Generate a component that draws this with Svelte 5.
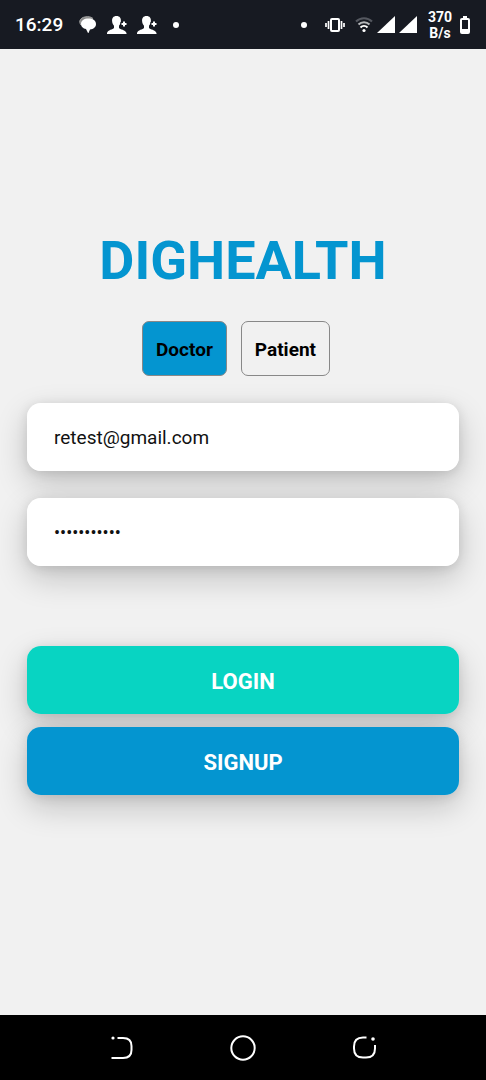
<script>
  let role = $state('Doctor');
  let email = $state('retest@gmail.com');
  let password = $state('password123');
  const roles = ['Doctor', 'Patient'];
</script>

{#snippet contact()}
  <svg width="20" height="18" viewBox="0 0 20 18" fill="#fff" aria-hidden="true">
    <path d="M9.500 0c3.300 0 4.600 2.200 4.400 5-.1 2-.9 3.700-1.900 4.700V12c1 1.600 6.500 1.700 7.500 5v1H0v-1c.8-3.300 6-3.400 7-5V9.700C6 8.700 5.200 7 5.100 5 4.900 2.200 6.200 0 9.500 0z" />
    <path d="M17 4.500v7M13.500 8H20" stroke="#171a22" stroke-width="4" />
    <path d="M17 5.500v5M14.500 8h5" stroke="#fff" stroke-width="2" />
  </svg>
{/snippet}

{#snippet signal()}
  <svg width="18" height="18" viewBox="0 0 18 18" aria-hidden="true">
    <path d="M18 0v17H0z" fill="#fff" />
  </svg>
{/snippet}

<div class="screen">
  <header class="status">
    <div class="left">
      <time>16:29</time>
      <svg width="18" height="18" viewBox="0 0 18 18" aria-hidden="true">
        <path d="M2 9C-1 5 2 1.500 6 1c3-.6 6-.3 8 1.500" fill="#888" stroke="#aaa" />
        <path d="M9.500 2.500c4.500 0 7.500 2 7.500 5.500 0 3.200-2.500 5.200-6 5.500L9.500 17H9l-2-4C4 12.500 2 10.800 2 8c0-3.500 3-5.500 7.500-5.500z" fill="#fff" />
      </svg>
      {@render contact()}
      {@render contact()}
      <span class="dot"></span>
    </div>
    <div class="right">
      <span class="dot"></span>
      <svg class="vibrate" width="20" height="16" viewBox="0 0 20 16" fill="none" stroke="#fff" stroke-width="2" aria-hidden="true">
        <rect x="6" y="2" width="8" height="12" rx="1" />
        <path d="M3.500 4v8M16.500 4v8" stroke-width="1.700" />
        <path d="M1 6v4M19 6v4" stroke-width="1.700" />
      </svg>
      <svg class="wifi" width="18" height="18" viewBox="0 0 18 18" fill="none" stroke-width="2" aria-hidden="true">
        <path d="M1 5.500C5.500 1 12.500 1 17 5.500" stroke="#555860" />
        <path d="M3.500 8.500c3-3 8-3 11 0" stroke="#b5b7ba" />
        <path d="M5.500 11.500c2-2 5-2 7 0" stroke="#fff" />
        <circle cx="9" cy="14.500" r="1.600" fill="#fff" />
      </svg>
      {@render signal()}
      {@render signal()}
      <span class="speed">370<br />B/s</span>
      <svg width="12" height="18" viewBox="0 0 12 18" aria-hidden="true">
        <path d="M4 0h4v2H4z" fill="#fff" />
        <rect x="2" y="3" width="8" height="14" rx="1" fill="none" stroke="#fff" stroke-width="2" />
        <path d="M2 13h8v4H2z" fill="#fff" />
      </svg>
    </div>
  </header>

  <main>
    <h1>DIGHEALTH</h1>
    <div class="roles" role="group" aria-label="Role">
      {#each roles as name}
        <button type="button" class="role" class:active={role === name} aria-pressed={role === name} onclick={() => (role = name)}>{name}</button>
      {/each}
    </div>
    <form onsubmit={(e) => e.preventDefault()}>
      <div class="fields">
        <div class="raised"><input type="email" aria-label="Email" autocomplete="off" bind:value={email} /></div>
        <div class="raised"><input type="password" aria-label="Password" autocomplete="off" bind:value={password} /></div>
      </div>
      <div class="actions">
        <button class="raised login" type="submit">LOGIN</button>
        <button class="raised signup" type="button">SIGNUP</button>
      </div>
    </form>
  </main>

  <nav aria-label="System">
    <button type="button" aria-label="Back">
      <svg width="26" height="26" viewBox="0 0 26 26" fill="none" stroke="#fff" stroke-width="2">
        <path d="M8.500 3H14c6 0 8.500 2.500 8.500 8v4c0 5.500-2.500 8-8.500 8H2.500" />
        <circle cx="4" cy="3" r="1.600" fill="#fff" stroke="none" />
      </svg>
    </button>
    <button type="button" aria-label="Home">
      <svg width="26" height="26" viewBox="0 0 26 26" fill="none" stroke="#fff" stroke-width="2">
        <circle cx="13" cy="13" r="11.700" />
      </svg>
    </button>
    <button type="button" aria-label="Recent apps">
      <svg width="26" height="26" viewBox="0 0 26 26" fill="none" stroke="#fff" stroke-width="2">
        <path d="M15.500 2.500H12c-6 0-9 3-9 9v2c0 6 3 9 9 9h3c6 0 9-3 9-9V10" />
        <circle cx="22" cy="4" r="1.800" fill="#fff" stroke="none" />
      </svg>
    </button>
  </nav>
</div>

<style>
  :global(body) {
    margin: 0;
    background: #f1f1f1;
  }
  .screen {
    min-height: 100vh;
    display: flex;
    flex-direction: column;
    font-family: Roboto, sans-serif;
    color: #000;
  }
  button,
  input {
    font-family: inherit;
    border: 0;
    margin: 0;
  }
  button {
    cursor: pointer;
  }
  svg {
    display: block;
    flex: none;
  }
  .status {
    height: 49px;
    padding: 0 15px;
    box-sizing: border-box;
    background: #171a22;
    color: #fff;
    display: flex;
    justify-content: space-between;
    align-items: center;
  }
  .left,
  .right {
    display: flex;
    align-items: center;
  }
  .left {
    gap: 10px;
  }
  time {
    font-size: 19px;
    font-weight: 500;
    margin-right: 6px;
  }
  .dot {
    width: 6px;
    height: 6px;
    margin: 0 6px;
    border-radius: 50%;
    background: #fff;
  }
  .right {
    gap: 4px;
  }
  .vibrate {
    margin: 0 6px 0 8px;
  }
  .speed {
    width: 30px;
    margin-left: 4px;
    font-size: 14px;
    line-height: 16px;
    font-weight: 700;
    text-align: center;
  }
  main {
    flex: 1;
    padding: 180px 27px 40px;
    isolation: isolate;
  }
  h1 {
    margin: 0;
    font-size: 54px;
    line-height: 64px;
    font-weight: 700;
    text-align: center;
    color: #0495d0;
  }
  .roles {
    display: flex;
    justify-content: center;
    margin: 28px 0 27px;
  }
  .role {
    height: 55px;
    margin-right: 14px;
    padding: 1px 13px 0;
    border: 1px solid #888;
    border-radius: 7px;
    background: transparent;
    color: #000;
    font-size: 19px;
    font-weight: 700;
  }
  .role.active {
    background: #0495d0;
  }
  .fields,
  .actions {
    display: flex;
    flex-direction: column;
  }
  .fields {
    gap: 27px;
  }
  .actions {
    gap: 13px;
    margin-top: 80px;
  }
  .raised {
    position: relative;
    height: 68px;
    border-radius: 14px;
  }
  .raised::before {
    content: '';
    position: absolute;
    inset: 0;
    z-index: -1;
    border-radius: 14px;
    box-shadow:
      0 12px 32px rgba(0, 0, 0, 0.2),
      0 2px 12px rgba(0, 0, 0, 0.1);
  }
  input {
    display: block;
    width: 100%;
    height: 100%;
    box-sizing: border-box;
    padding: 0 27px;
    border-radius: 14px;
    outline: none;
    background: #fff;
    color: #111;
    font-size: 19px;
  }
  input[type='password'] {
    font-size: 18px;
  }
  .actions .raised {
    padding: 2px 0 0;
    color: #fff;
    font-size: 22px;
    font-weight: 700;
  }
  .login {
    background: #08d4c2;
  }
  .signup {
    background: #0495d0;
  }
  nav {
    height: 65px;
    padding: 0 61px;
    background: #000;
    display: flex;
    align-items: center;
  }
  nav button {
    flex: 1;
    padding: 0;
    background: none;
    display: flex;
    justify-content: center;
  }
</style>
